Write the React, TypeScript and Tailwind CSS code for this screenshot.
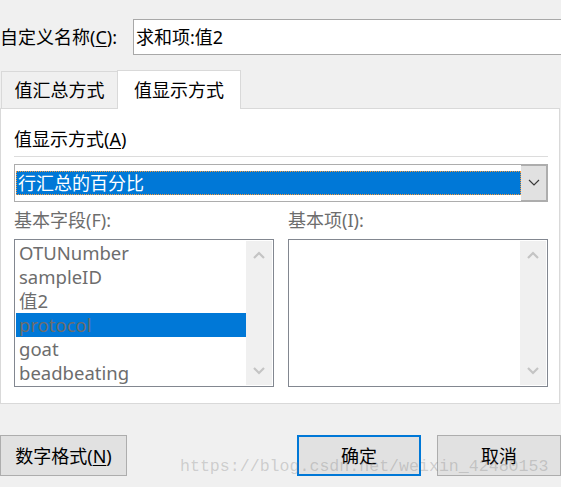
import React from "react";

const Up = ({ color = "#c4c4c4" }: { color?: string }) => (
  <svg width="12" height="8" viewBox="0 0 12 8">
    <path d="M1 7 L6 2 L11 7" fill="none" stroke={color} strokeWidth="2.2" />
  </svg>
);
const Down = ({ color = "#c4c4c4", w = 2.2 }: { color?: string; w?: number }) => (
  <svg width="12" height="8" viewBox="0 0 12 8">
    <path d="M1 1 L6 6 L11 1" fill="none" stroke={color} strokeWidth={w} />
  </svg>
);

const ScrollBar = () => (
  <div className="w-[26px] h-full bg-[#f0f0f0] flex flex-col justify-between items-center py-[10px]">
    <Up />
    <Down />
  </div>
);

export default function App() {
  const items = ["OTUNumber", "sampleID", "值2", "protocol", "goat", "beadbeating"];
  return (
    <div className="relative w-[561px] h-[487px] overflow-hidden bg-[#f0f0f0] text-black font-['Noto_Sans','Noto_Sans_CJK_SC',sans-serif]">
      {/* clipped title */}
      <div className="h-[2px] overflow-hidden">
        <div className="-mt-[21px] leading-[22px] text-[18px] pl-[0px]">值字段设置</div>
      </div>

      {/* name row */}
      <div className="flex items-start mt-[17px]">
        <div className="w-[133px] shrink-0 h-[36px] flex items-center text-[18px] leading-[24px] whitespace-nowrap">
          自定义名称(<span className="underline underline-offset-2">C</span>):
        </div>
        <div className="w-[440px] h-[36px] bg-white border border-[#a8a8a8] flex items-center pl-[2px] text-[18px] leading-[24px] shrink-0">
          求和项:值2
        </div>
      </div>

      {/* tabs */}
      <div className="flex items-end pl-px mt-[15px]">
        <div className="w-[116px] h-[37px] border-t border-l border-[#d9d9d9] flex items-center justify-center text-[18px] leading-[24px]">
          值汇总方式
        </div>
        <div className="relative z-10 -mb-px w-[124px] h-[39px] bg-white border border-b-0 border-[#d9d9d9] flex items-center justify-center text-[18px] leading-[24px]">
          值显示方式
        </div>
      </div>

      {/* panel */}
      <div className="w-[560px] bg-white border border-[#d9d9d9] pl-[13px] pr-[11px] pt-[18px] pb-[16px]">
        <div className="h-[24px] text-[18px] leading-[24px]">
          值显示方式(<span className="underline underline-offset-2">A</span>)
        </div>
        <div className="mt-[5px] h-px bg-[#dcdcdc]" />
        <div className="mt-[7px] w-[534px] h-[38px] border border-[#adadad] flex">
          <div className="flex-1 flex items-center pl-px">
            <div className="w-full h-[24px] bg-[#0078d7] border border-dotted border-[#f59a3c] flex items-center pl-px text-white text-[18px] leading-[22px]">
              行汇总的百分比
            </div>
          </div>
          <div className="w-[26px] bg-[#e1e1e1] border-y border-r border-[#adadad] flex items-center justify-center">
            <Down color="#3a3a3a" w={1.2} />
          </div>
        </div>
        <div className="mt-[6px] h-[24px] flex text-[18px] leading-[24px] text-[#6d6d6d]">
          <div className="w-[274px]">基本字段(F):</div>
          <div>基本项(I):</div>
        </div>
        <div className="mt-[7px] flex gap-[14px]">
          <div className="w-[260px] h-[148px] border border-[#828790] p-px flex">
            <div className="flex-1 flex flex-col">
              {items.map((t) => (
                <div
                  key={t}
                  className={`h-[24px] flex items-center pl-[3px] text-[18.5px] leading-[24px] text-[#6d6d6d] ${
                    t === "protocol" ? "bg-[#0078d7]" : ""
                  }`}
                >
                  {t}
                </div>
              ))}
            </div>
            <ScrollBar />
          </div>
          <div className="w-[260px] h-[148px] border border-[#828790] p-px flex">
            <div className="flex-1" />
            <ScrollBar />
          </div>
        </div>
      </div>

      {/* buttons */}
      <div className="mt-[31px] flex">
        <div className="w-[127px] h-[41px] bg-[#e1e1e1] border border-[#adadad] flex items-center justify-center text-[18px] leading-[24px]">
          数字格式(<span className="underline underline-offset-2">N</span>)
        </div>
        <div className="ml-[170px] w-[124px] h-[41px] bg-[#e1e1e1] border-2 border-[#0078d7] flex items-center justify-center text-[18px] leading-[24px]">
          确定
        </div>
        <div className="ml-[16px] w-[124px] h-[41px] bg-[#e1e1e1] border border-[#adadad] flex items-center justify-center text-[18px] leading-[24px]">
          取消
        </div>
      </div>

      {/* watermark */}
      <div className="absolute left-[180px] top-[456px] leading-[22px] text-[16.6px] font-['Liberation_Mono',monospace] text-[rgba(120,120,120,0.3)] whitespace-nowrap pointer-events-none">
        https://blog.csdn.net/weixin_42480153
      </div>
    </div>
  );
}
